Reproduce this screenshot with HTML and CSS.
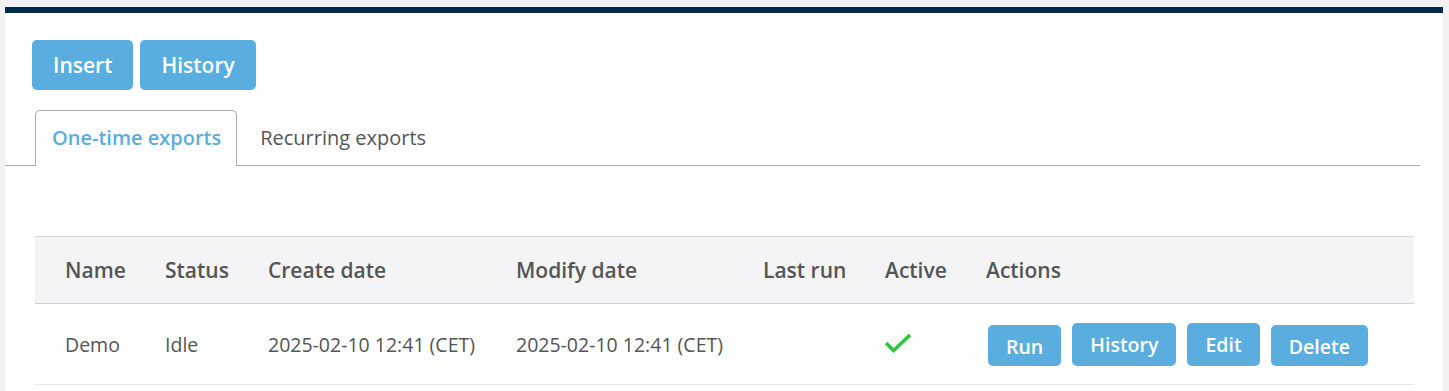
FILE: index.html
```html
<!DOCTYPE html>
<html lang="en">
<head>
    <meta charset="UTF-8">
    <meta name="viewport" content="width=device-width, initial-scale=1.0">
    <title>Exports</title>
    <link rel="stylesheet" href="styles.css">
</head>
<body>
    <div class="panel">
        <div class="toolbar">
            <button type="button" class="btn btn-lg">Insert</button>
            <button type="button" class="btn btn-lg">History</button>
        </div>

        <ul class="tabs">
            <li class="tab active">One-time exports</li>
            <li class="tab">Recurring exports</li>
        </ul>

        <table class="grid">
            <colgroup>
                <col class="c-name">
                <col class="c-status">
                <col class="c-create">
                <col class="c-modify">
                <col class="c-last">
                <col class="c-active">
                <col class="c-actions">
            </colgroup>
            <thead>
                <tr>
                    <th>Name</th>
                    <th>Status</th>
                    <th>Create date</th>
                    <th>Modify date</th>
                    <th>Last run</th>
                    <th>Active</th>
                    <th>Actions</th>
                </tr>
            </thead>
            <tbody>
                <tr>
                    <td>Demo</td>
                    <td>Idle</td>
                    <td>2025-02-10 12:41 (CET)</td>
                    <td>2025-02-10 12:41 (CET)</td>
                    <td></td>
                    <td>
                        <svg class="check" width="30" height="22" viewBox="0 0 30 22">
                            <polyline points="2,10 9.5,17.5 26,2" fill="none" stroke="#2ec83f" stroke-width="3.6"/>
                        </svg>
                    </td>
                    <td class="actions">
                        <button type="button" class="btn btn-sm low">Run</button>
                        <button type="button" class="btn btn-sm">History</button>
                        <button type="button" class="btn btn-sm">Edit</button>
                        <button type="button" class="btn btn-sm low">Delete</button>
                    </td>
                </tr>
            </tbody>
        </table>
    </div>
</body>
</html>
```

FILE: styles.css
```css
*{
    margin: 0;
    padding: 0;
    box-sizing: border-box;
}
body{
    background-color: #f2f2f2;
    font-family: "Open Sans", "Liberation Sans", sans-serif;
    color: #555;
}
.panel{
    margin: 7px 0 0 5px;
    width: 1438px;
    height: 384px;
    background-color: #fff;
    border-top: 6px solid #022b4a;
}
.toolbar{
    display: flex;
    gap: 7px;
    padding: 27px 0 0 27px;
}
.btn{
    background-color: #5aaddf;
    color: #fff;
    border: none;
    border-radius: 5px;
    font-family: inherit;
    font-weight: 600;
}
.btn-lg{
    height: 50px;
    padding: 0 21px;
    font-size: 21px;
}
.tabs{
    list-style: none;
    display: flex;
    margin: 20px 23px 0 0;
    padding-left: 30px;
    border-bottom: 1px solid #aaa;
}
.tab{
    height: 55px;
    padding: 0 17px 0 22px;
    font-size: 20px;
    line-height: 53px;
    color: #555;
    border: 1px solid transparent;
    border-bottom: none;
}
.tab.active{
    padding: 0 15px 0 16px;
    color: #5aaddf;
    font-weight: 600;
    border-color: #aaa;
    border-radius: 5px 5px 0 0;
    background-color: #fff;
    margin-bottom: -1px;
    height: 56px;
}
.grid{
    margin: 70px 0 0 30px;
    width: 1379px;
    border-collapse: collapse;
    table-layout: fixed;
}
.c-name{ width: 100px; }
.c-status{ width: 103px; }
.c-create{ width: 248px; }
.c-modify{ width: 247px; }
.c-last{ width: 122px; }
.c-active{ width: 101px; }
.grid th{
    height: 67px;
    text-align: left;
    padding-left: 30px;
    font-size: 21px;
    font-weight: 600;
    background-color: #f4f4f6;
    border-top: 1px solid #d6d6da;
    border-bottom: 1px solid #d0d0d4;
}
.grid td{
    height: 81px;
    padding-left: 30px;
    font-size: 19.5px;
    border-bottom: 1px solid #e6e6e8;
    white-space: nowrap;
}
.check{
    display: block;
    margin-left: -1px;
}
.actions{
    padding-left: 32px !important;
}
.btn-sm{
    height: 43px;
    padding: 0 18px;
    font-size: 19.5px;
    margin-right: 6px;
    vertical-align: middle;
}
.btn-sm.low{
    height: 41px;
    margin-top: 2px;
    padding-top: 3px;
}
```
